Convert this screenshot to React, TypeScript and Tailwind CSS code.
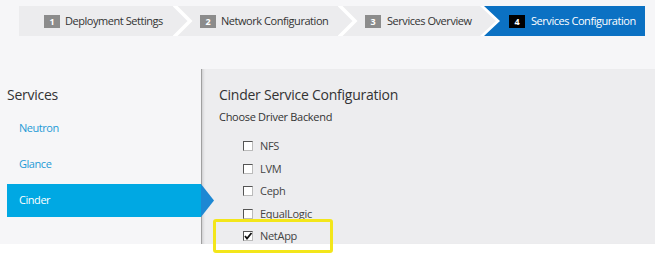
import React from "react";

const font = { fontFamily: '"Open Sans", "Noto Sans", Arial, sans-serif' };

function Num({ n, active }: { n: string; active?: boolean }) {
  return (
    <span
      className={`flex items-center justify-center w-[16px] h-[13px] text-[9px] font-bold leading-none text-white ${
        active ? "bg-black" : "bg-[#8c8c8c]"
      }`}
    >
      {n}
    </span>
  );
}

function Chevron() {
  return (
    <svg width="20" height="30" viewBox="0 0 20 30" className="shrink-0">
      <polyline points="1,-1 17,15 1,31" fill="none" stroke="#ffffff" strokeWidth="3.5" />
    </svg>
  );
}

function Check({ label, checked }: { label: string; checked?: boolean }) {
  return (
    <div className="flex items-center h-[22.5px] pl-[24px]">
      <span className="relative w-[10px] h-[10px] bg-white border border-[#555] border-r-[#bbb] border-b-[#bbb] shrink-0">
        {checked && (
          <svg width="10" height="10" viewBox="0 0 10 10" className="absolute left-[-1px] top-[-1px]">
            <polyline points="2,5 4,7.5 8.5,2" fill="none" stroke="#111" strokeWidth="1.8" />
          </svg>
        )}
      </span>
      <span className="ml-[7px] text-[11px] tracking-[-0.3px] text-[#444]">{label}</span>
    </div>
  );
}

const stepText = "text-[11px] tracking-[-0.45px] whitespace-nowrap";

export default function App() {
  return (
    <div className="w-[655px] h-[257px] bg-white overflow-hidden relative" style={font}>
      {/* top */}
      <div className="h-[69px] bg-[#f6f6f8] pt-[6px] pl-[19px] pr-[10px]">
        <div className="flex h-[30px] bg-[#ececee]">
          <div className="w-[154px] flex items-center pl-[25px] gap-[5px]">
            <Num n="1" />
            <span className={`${stepText} text-[#333]`}>Deployment Settings</span>
          </div>
          <Chevron />
          <div className="w-[145px] flex items-center pl-[7px] gap-[5px]">
            <Num n="2" />
            <span className={`${stepText} text-[#333]`}>Network Configuration</span>
          </div>
          <Chevron />
          <div className="w-[122px] flex items-center pl-[7px] gap-[6px]">
            <Num n="3" />
            <span className={`${stepText} text-[#333]`}>Services Overview</span>
          </div>
          <div
            className="flex-1 bg-white"
            style={{ clipPath: "polygon(0 0, 100% 0, 100% 100%, 0 100%, 16px 50%)" }}
          >
            <div
              className="h-full bg-[#0b71c3] flex items-center pl-[29px] gap-[6px]"
              style={{ clipPath: "polygon(4px 0, 100% 0, 100% 100%, 4px 100%, 20px 50%)" }}
            >
              <Num n="4" active />
              <span className={`${stepText} text-white`}>Services Configuration</span>
            </div>
          </div>
        </div>
      </div>

      {/* main */}
      <div className="flex h-[175px]">
        <div className="w-[201px] bg-[#f6f6f8] flex flex-col">
          <div className="mt-[16px] h-[20px] pl-[7px] text-[14px] tracking-[-0.25px] leading-[20px] text-[#333]">Services</div>
          <div className="mt-[6px] h-[34px] pl-[19px] flex items-center text-[11px] tracking-[-0.45px] text-[#1e9ad6]">Neutron</div>
          <div className="mt-[2px] h-[34px] pl-[19px] flex items-center text-[11px] tracking-[-0.45px] text-[#1e9ad6]">Glance</div>
          <div className="mt-[3px] h-[33px] ml-[7px] pl-[12px] flex items-center text-[11px] tracking-[-0.45px] text-white bg-[#00a8e3]">
            Cinder
          </div>
        </div>
        <div className="flex-1 bg-[#ededef] border-l border-[#a0a0a0] shadow-[inset_3px_0_3px_-2px_rgba(0,0,0,0.15)] pl-[17px] flex flex-col">
          <div className="mt-[16px] h-[20px] text-[14px] tracking-[-0.25px] leading-[20px] text-[#333]">Cinder Service Configuration</div>
          <div className="mt-[4px] h-[16px] text-[11px] tracking-[-0.3px] leading-[16px] text-[#333]">Choose Driver Backend</div>
          <div className="mt-[10px] flex flex-col">
            <Check label="NFS" />
            <Check label="LVM" />
            <Check label="Ceph" />
            <Check label="EqualLogic" />
            <Check label="NetApp" checked />
          </div>
        </div>
      </div>

      {/* active pointer triangle */}
      <svg width="14" height="33" viewBox="0 0 14 33" className="absolute left-[201px] top-[184px]">
        <polygon points="0,0 13,16.5 0,33" fill="#1d88d3" />
      </svg>

      {/* highlight */}
      <div className="absolute left-[213px] top-[219px] w-[120px] h-[34px] border-[3px] border-[#f3e61a] rounded-[3px]" />
    </div>
  );
}
